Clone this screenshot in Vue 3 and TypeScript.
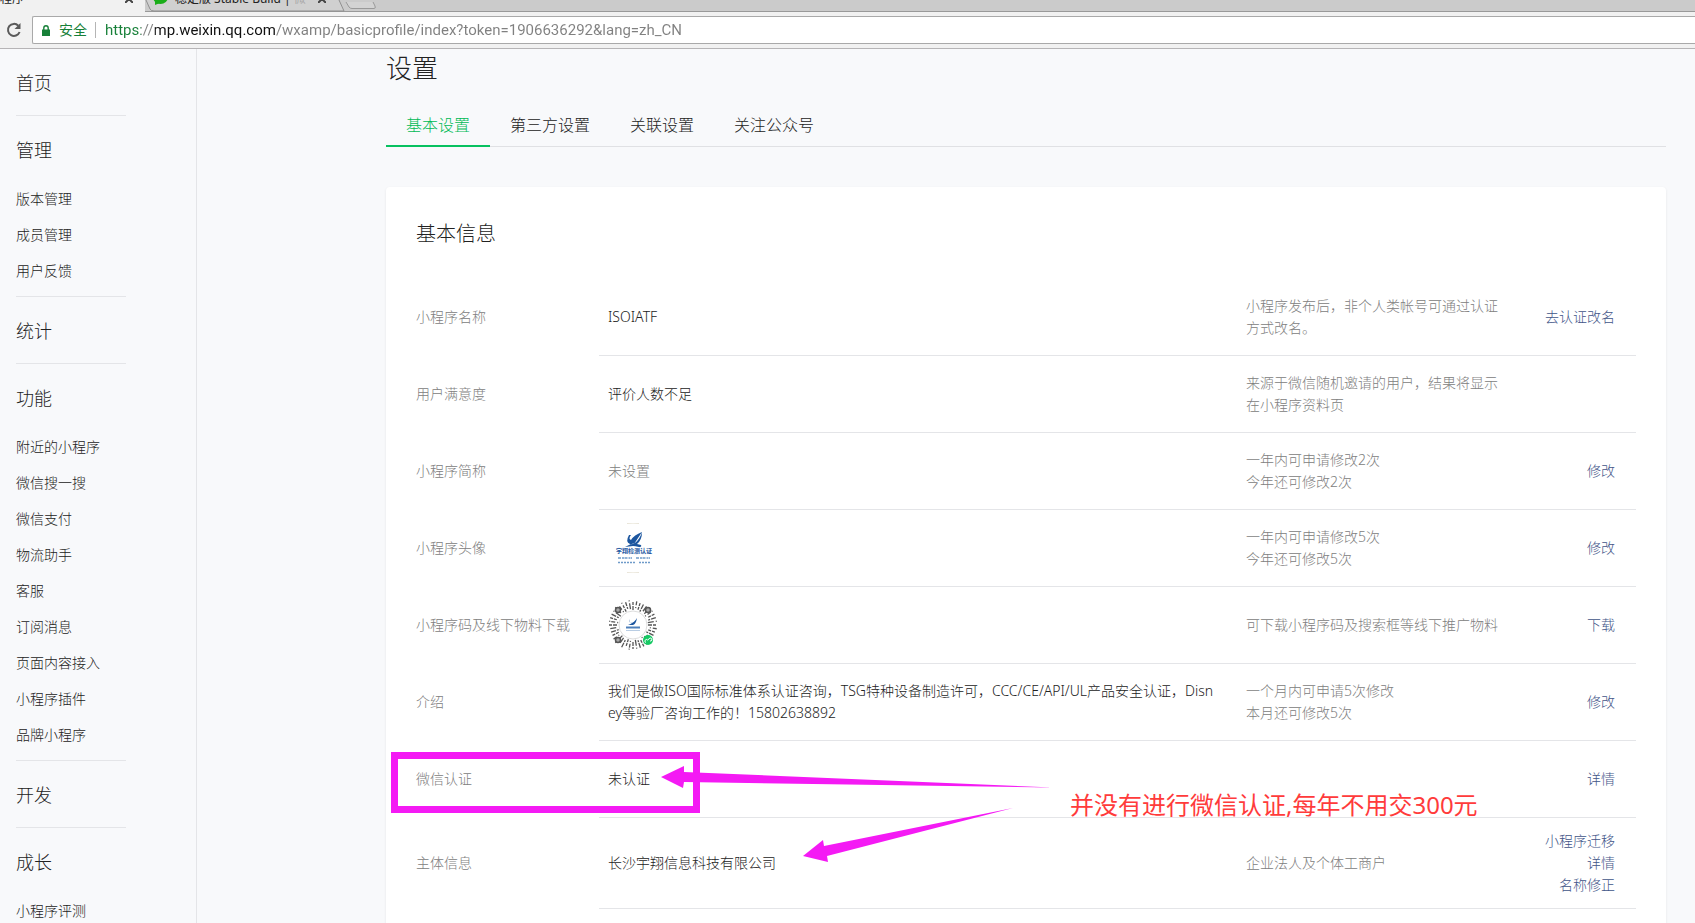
<script setup lang="ts">
import { ref } from 'vue'

interface NavSection {
  title: string
  items: string[]
}

interface InfoRow {
  label: string
  value: string[]
  kind?: 'muted' | 'avatar' | 'code'
  note: string[]
  actions: string[]
}

const url = ref('https://mp.weixin.qq.com/wxamp/basicprofile/index?token=1906636292&lang=zh_CN')

const sections: NavSection[] = [
  { title: '首页', items: [] },
  { title: '管理', items: ['版本管理', '成员管理', '用户反馈'] },
  { title: '统计', items: [] },
  {
    title: '功能',
    items: ['附近的小程序', '微信搜一搜', '微信支付', '物流助手', '客服', '订阅消息', '页面内容接入', '小程序插件', '品牌小程序'],
  },
  { title: '开发', items: [] },
  { title: '成长', items: ['小程序评测'] },
]

const tabs = ['基本设置', '第三方设置', '关联设置', '关注公众号']
const activeTab = ref(tabs[0])

const rows: InfoRow[] = [
  { label: '小程序名称', value: ['ISOIATF'], note: ['小程序发布后，非个人类帐号可通过认证', '方式改名。'], actions: ['去认证改名'] },
  { label: '用户满意度', value: ['评价人数不足'], note: ['来源于微信随机邀请的用户，结果将显示', '在小程序资料页'], actions: [] },
  { label: '小程序简称', value: ['未设置'], kind: 'muted', note: ['一年内可申请修改2次', '今年还可修改2次'], actions: ['修改'] },
  { label: '小程序头像', value: [], kind: 'avatar', note: ['一年内可申请修改5次', '今年还可修改5次'], actions: ['修改'] },
  { label: '小程序码及线下物料下载', value: [], kind: 'code', note: ['可下载小程序码及搜索框等线下推广物料'], actions: ['下载'] },
  {
    label: '介绍',
    value: ['我们是做ISO国际标准体系认证咨询，TSG特种设备制造许可，CCC/CE/API/UL产品安全认证，Disn', 'ey等验厂咨询工作的！15802638892'],
    note: ['一个月内可申请5次修改', '本月还可修改5次'],
    actions: ['修改'],
  },
  { label: '微信认证', value: ['未认证'], note: [], actions: ['详情'] },
  { label: '主体信息', value: ['长沙宇翔信息科技有限公司'], note: ['企业法人及个体工商户'], actions: ['小程序迁移', '详情', '名称修正'] },
]

// Radial strokes of the mini program code: 40 rays, each split into dashes of its own.
const rays = Array.from({ length: 40 }, (_, i) => ({
  angle: i * 9,
  dash: ['4 1 3 1', '2 1 5 2', '1 2 4 1', '6 2 1 1', '3 1 3 2'][(i * 7) % 5],
  inner: 15 + ((i * 5) % 3),
  outer: 24 + ((i * 3) % 2),
}))
</script>

<template>
  <div class="window">
    <header class="browser">
      <div class="strip">
        <div class="tab tab-active">
          <span class="tab-name">程序</span>
          <svg class="cross" viewBox="0 0 8 8"><path d="M0 0 8 8M8 0 0 8" /></svg>
        </div>
        <div class="tab">
          <svg class="edge" viewBox="0 0 200 12" preserveAspectRatio="none">
            <path class="edge-fill" d="M1 0 5 9Q6 11 9 11H199L194 0Z" />
            <path class="edge-line" d="M1 0 5 9Q6 11 9 11H199L194 0" />
          </svg>
          <svg class="chat" viewBox="0 0 16 14"><ellipse cx="7.500" cy="5" rx="7.500" ry="7" /><path d="M2 8v5l5-2z" /></svg>
          <span class="tab-name tab-second">稳定版 Stable Build | <i>微</i></span>
          <svg class="cross" viewBox="0 0 8 8"><path d="M0 0 8 8M8 0 0 8" /></svg>
        </div>
        <button class="new-tab" type="button" aria-label="新标签页">
          <svg viewBox="0 0 32 8"><path d="M1 0 4 5Q5 6.500 7 6.500H29Q31 6.500 30 4L28 0" /></svg>
        </button>
      </div>
      <div class="toolbar">
        <button class="reload" type="button" aria-label="重新加载">
          <svg viewBox="0 0 16 16"><path class="arc" d="M12.300 3.700A6 6 0 1 0 13.600 10" /><path class="head" d="M14.500 1V7H8.500z" /></svg>
        </button>
        <div class="address">
          <svg class="lock" viewBox="0 0 8 11"><path d="M0 4.500h8V11H0z" /><path class="shackle" d="M1.800 5V3a2.200 2.200 0 0 1 4.400 0v2" /></svg>
          <span class="secure">安全</span>
          <input v-model="url" class="url" type="text" aria-label="地址" spellcheck="false" />
        </div>
      </div>
    </header>

    <div class="page">
      <nav class="side">
        <section v-for="section in sections" :key="section.title" class="group">
          <a class="group-title" href="#">{{ section.title }}</a>
          <ul v-if="section.items.length" class="group-list">
            <li v-for="item in section.items" :key="item"><a href="#">{{ item }}</a></li>
          </ul>
        </section>
      </nav>

      <main class="main">
        <h1>设置</h1>
        <div class="tabs" role="tablist">
          <button
            v-for="tab in tabs"
            :key="tab"
            type="button"
            role="tab"
            :aria-selected="tab === activeTab"
            :class="{ current: tab === activeTab }"
            @click="activeTab = tab"
          >{{ tab }}</button>
        </div>

        <section class="card">
          <h2>基本信息</h2>
          <table>
            <tbody>
              <tr v-for="row in rows" :key="row.label">
                <th scope="row">{{ row.label }}</th>
                <td class="value" :class="{ muted: row.kind === 'muted' }">
                  <svg v-if="row.kind === 'avatar'" class="picture" viewBox="0 0 50 50">
                    <path class="rim" d="M19 .5Q25-.3 31 .5M19 49.500Q25 50.300 31 49.500" />
                    <g class="brand">
                      <path d="M21 12q-4 7 1 9 4 1 6-3l6-9q-8 3-11 8-3-1 0-5zM34 9q0 8-5 12l4 1q1 2-2 2-4-1-6-1l-8 1q5-3 10-4 5-4 7-11z" />
                      <text x="26" y="30">宇翔检测认证</text>
                      <path class="fine" d="M10 35h14M28 35h14" />
                      <path class="fine small" d="M10 39.500h18M31 39.500h11" />
                    </g>
                  </svg>
                  <svg v-else-if="row.kind === 'code'" class="picture" viewBox="0 0 50 50">
                    <g class="rays">
                      <line
                        v-for="ray in rays"
                        :key="ray.angle"
                        :x1="25 + ray.inner"
                        y1="25"
                        :x2="25 + ray.outer"
                        y2="25"
                        :stroke-dasharray="ray.dash"
                        :transform="`rotate(${ray.angle} 25 25)`"
                      />
                    </g>
                    <g class="eyes">
                      <circle cx="10" cy="10" r="2.500" />
                      <circle cx="40" cy="10" r="2.500" />
                      <circle cx="10" cy="40" r="2.500" />
                    </g>
                    <circle class="halo" cx="25" cy="25" r="14" />
                    <path class="mark" d="M22 19q-1 4 1 4 3 0 6-5-1 6-4 7h-5q3-1 4-2-4 0-2-4z" />
                    <path class="name" d="M18 27.500h14" />
                    <path class="sub" d="M18 30.500h14" />
                    <circle class="badge" cx="40" cy="40" r="5" />
                    <path class="swirl" d="M38 42.500a1.500 1.500 0 1 1 1.500-2.500L41 39a1.500 1.500 0 1 1 1 2" />
                  </svg>
                  <template v-else>
                    <div v-for="line in row.value" :key="line">{{ line }}</div>
                  </template>
                </td>
                <td class="note"><div v-for="line in row.note" :key="line">{{ line }}</div></td>
                <td class="actions"><div v-for="action in row.actions" :key="action"><a href="#">{{ action }}</a></div></td>
              </tr>
            </tbody>
          </table>
        </section>
      </main>

      <div class="marks">
        <div class="frame"></div>
        <svg class="arrows" viewBox="0 0 400 100">
          <path d="M1 12 24 1V7L393 22.500 24 17 23 23zM143 91 163 75 164 81 353 43 167 91 168 97z" />
        </svg>
        <p class="remark">并没有进行微信认证,每年不用交300元</p>
      </div>
    </div>
  </div>
</template>

<style>
body {
  margin: 0;
  background: #f8f9fb;
}
</style>

<style scoped>
.window {
  display: flex;
  flex-direction: column;
  height: 100vh;
  overflow: hidden;
  background: #f8f9fb;
  color: #222;
  font: 300 14px/22px "Noto Sans", "Noto Sans CJK SC", sans-serif;
}

a {
  color: inherit;
  text-decoration: none;
}

button {
  margin: 0;
  padding: 0;
  border: 0;
  background: none;
  color: inherit;
  font: inherit;
}

/* Browser bars */
.browser {
  flex: none;
  background: #f1f1f1;
  border-bottom: 1px solid #b6b4b6;
}

.strip {
  display: flex;
  height: 12px;
  overflow: hidden;
  background: #cbcbcb;
  box-shadow: inset 0 -1px #999;
}

.tab {
  position: relative;
  display: flex;
  align-items: flex-start;
  width: 200px;
  height: 12px;
}

.tab-active {
  width: 145px;
  background: #f1f1f1;
}

.tab-name {
  flex: 1;
  margin-top: -10px;
  overflow: hidden;
  white-space: nowrap;
  font-size: 12px;
  font-weight: 400;
  line-height: 18px;
  color: #222;
}

.tab-second {
  z-index: 1;
  padding-left: 6px;
}

.tab-name i {
  font-style: normal;
  color: #aaa;
}

.cross {
  z-index: 1;
  width: 8px;
  height: 8px;
  margin: -5px 12px 0 0;
  fill: none;
  stroke: #444;
  stroke-width: 2;
}

.tab + .tab .cross {
  margin-right: 19px;
}

.edge {
  position: absolute;
  inset: 0;
  width: 100%;
  height: 12px;
}

.edge-fill {
  fill: #d0d0d0;
}

.edge-line {
  fill: none;
  stroke: #8f8f8f;
}

.chat {
  z-index: 1;
  width: 16px;
  height: 14px;
  margin: -8px 0 0 8px;
  fill: #1aad19;
}

.new-tab svg {
  display: block;
  width: 32px;
  height: 8px;
  fill: #d3d3d3;
  stroke: #999;
}

.toolbar {
  display: flex;
  align-items: center;
  gap: 10px;
  height: 28px;
  padding: 4px 0 4px 6px;
}

.reload {
  width: 16px;
  height: 16px;
}

.reload svg {
  display: block;
}

.reload .arc {
  fill: none;
  stroke: #5a5a5a;
  stroke-width: 2;
}

.reload .head {
  fill: #5a5a5a;
}

.address {
  display: flex;
  flex: 1;
  align-items: center;
  box-sizing: border-box;
  height: 28px;
  padding-left: 9px;
  background: #fff;
  border: 1px solid #a9a9a9;
  border-right: 0;
  border-radius: 2px 0 0 2px;
}

.lock {
  width: 8px;
  height: 11px;
  fill: #178038;
}

.lock .shackle {
  fill: none;
  stroke: #178038;
  stroke-width: 1.4;
}

.secure {
  margin-left: 9px;
  padding-right: 8px;
  border-right: 1px solid #b5b5b5;
  color: #178038;
  font-weight: 400;
  line-height: 16px;
}

.url {
  flex: 1;
  min-width: 0;
  margin-left: 9px;
  padding: 0;
  border: 0;
  outline: 0;
  background: linear-gradient(90deg, #178038 36px, #808080 36px 50px, #111 50px 171px, #808080 171px);
  background-clip: text;
  -webkit-background-clip: text;
  color: #808080;
  -webkit-text-fill-color: transparent;
  font: 15px/24px Roboto, "Noto Sans CJK SC", sans-serif;
}

/* Page */
.page {
  position: relative;
  display: flex;
  flex: 1;
  min-height: 0;
}

.side {
  flex: none;
  box-sizing: border-box;
  width: 197px;
  padding: 0 70px 0 16px;
  border-right: 1px solid #e4e5e8;
}

.group + .group {
  border-top: 1px solid #e4e5e8;
}

.group-title {
  display: block;
  padding: 20px 0 18px;
  font-size: 18px;
  line-height: 28px;
}

.group-list {
  margin: -1px 0 0;
  padding: 0 0 7px;
  list-style: none;
  line-height: 36px;
}

.main {
  flex: 1;
  min-width: 0;
  padding: 0 29px 0 189px;
}

h1 {
  margin: 0;
  font-size: 26px;
  font-weight: 300;
  line-height: 38px;
}

.tabs {
  display: flex;
  margin-top: 20px;
  border-bottom: 1px solid #e0e1e4;
}

.tabs button {
  height: 40px;
  margin-bottom: -1px;
  padding: 0 20px 2px;
  border-bottom: 2px solid transparent;
  font-size: 16px;
  line-height: 36px;
}

.tabs .current {
  color: #00b956;
  border-bottom-color: #07c160;
}

.card {
  margin-top: 40px;
  padding: 32px 30px 60px;
  border-radius: 4px;
  background: #fff;
  box-shadow: 0 1px 3px rgba(0, 0, 0, 0.08);
}

h2 {
  margin: 0 0 30px;
  font-size: 20px;
  font-weight: 300;
  line-height: 30px;
}

table {
  width: 100%;
  border-collapse: separate;
  border-spacing: 0;
  table-layout: fixed;
}

th,
td {
  box-sizing: border-box;
  height: 77px;
  padding: 12px 0;
  vertical-align: middle;
  text-align: left;
  font-weight: 300;
}

th {
  width: 183px;
  border-bottom: 1px solid transparent;
  color: #808080;
}

td {
  border-bottom: 1px solid #e4e5e8;
}

.value {
  padding-left: 9px;
  white-space: nowrap;
}

.muted,
.note {
  color: #808080;
}

.note {
  width: 275px;
  padding-left: 10px;
}

.actions {
  width: 125px;
  padding-right: 21px;
  text-align: right;
  color: #3f5588;
}

.picture {
  display: block;
  width: 50px;
  height: 50px;
}

.rim {
  fill: none;
  stroke: #e9e5d8;
}

.brand {
  fill: #1c569f;
}

.brand text {
  font-size: 6px;
  font-weight: 700;
  text-anchor: middle;
}

.fine {
  stroke: #6f9bc9;
  stroke-width: 1.5;
  stroke-dasharray: 3 1 2 0.5;
}

.fine.small {
  stroke-dasharray: 2 1;
}

.rays {
  stroke: #555;
  stroke-width: 1.3;
}

.eyes {
  fill: #aaa;
  stroke: #555;
  stroke-width: 1.5;
}

.halo {
  fill: #fff;
  stroke: #ddd;
}

.mark {
  fill: #1c569f;
}

.name {
  stroke: #4e80bb;
  stroke-width: 2;
}

.sub {
  stroke: #b9cde3;
}

.badge {
  fill: #17c964;
}

.swirl {
  fill: none;
  stroke: #fff;
}

/* Hand-drawn marks over the page */
.marks {
  position: absolute;
  inset: 0;
  overflow: hidden;
  pointer-events: none;
}

.frame {
  position: absolute;
  top: 703px;
  left: 391px;
  box-sizing: border-box;
  width: 309px;
  height: 61px;
  border: 7px solid #f41af4;
}

.arrows {
  position: absolute;
  top: 716px;
  left: 660px;
  width: 400px;
  height: 100px;
  fill: #f41af4;
}

.remark {
  position: absolute;
  top: 738px;
  left: 1070px;
  margin: 0;
  color: #ff3b3b;
  font-size: 24px;
  font-weight: 400;
  line-height: 36px;
  white-space: nowrap;
}
</style>
